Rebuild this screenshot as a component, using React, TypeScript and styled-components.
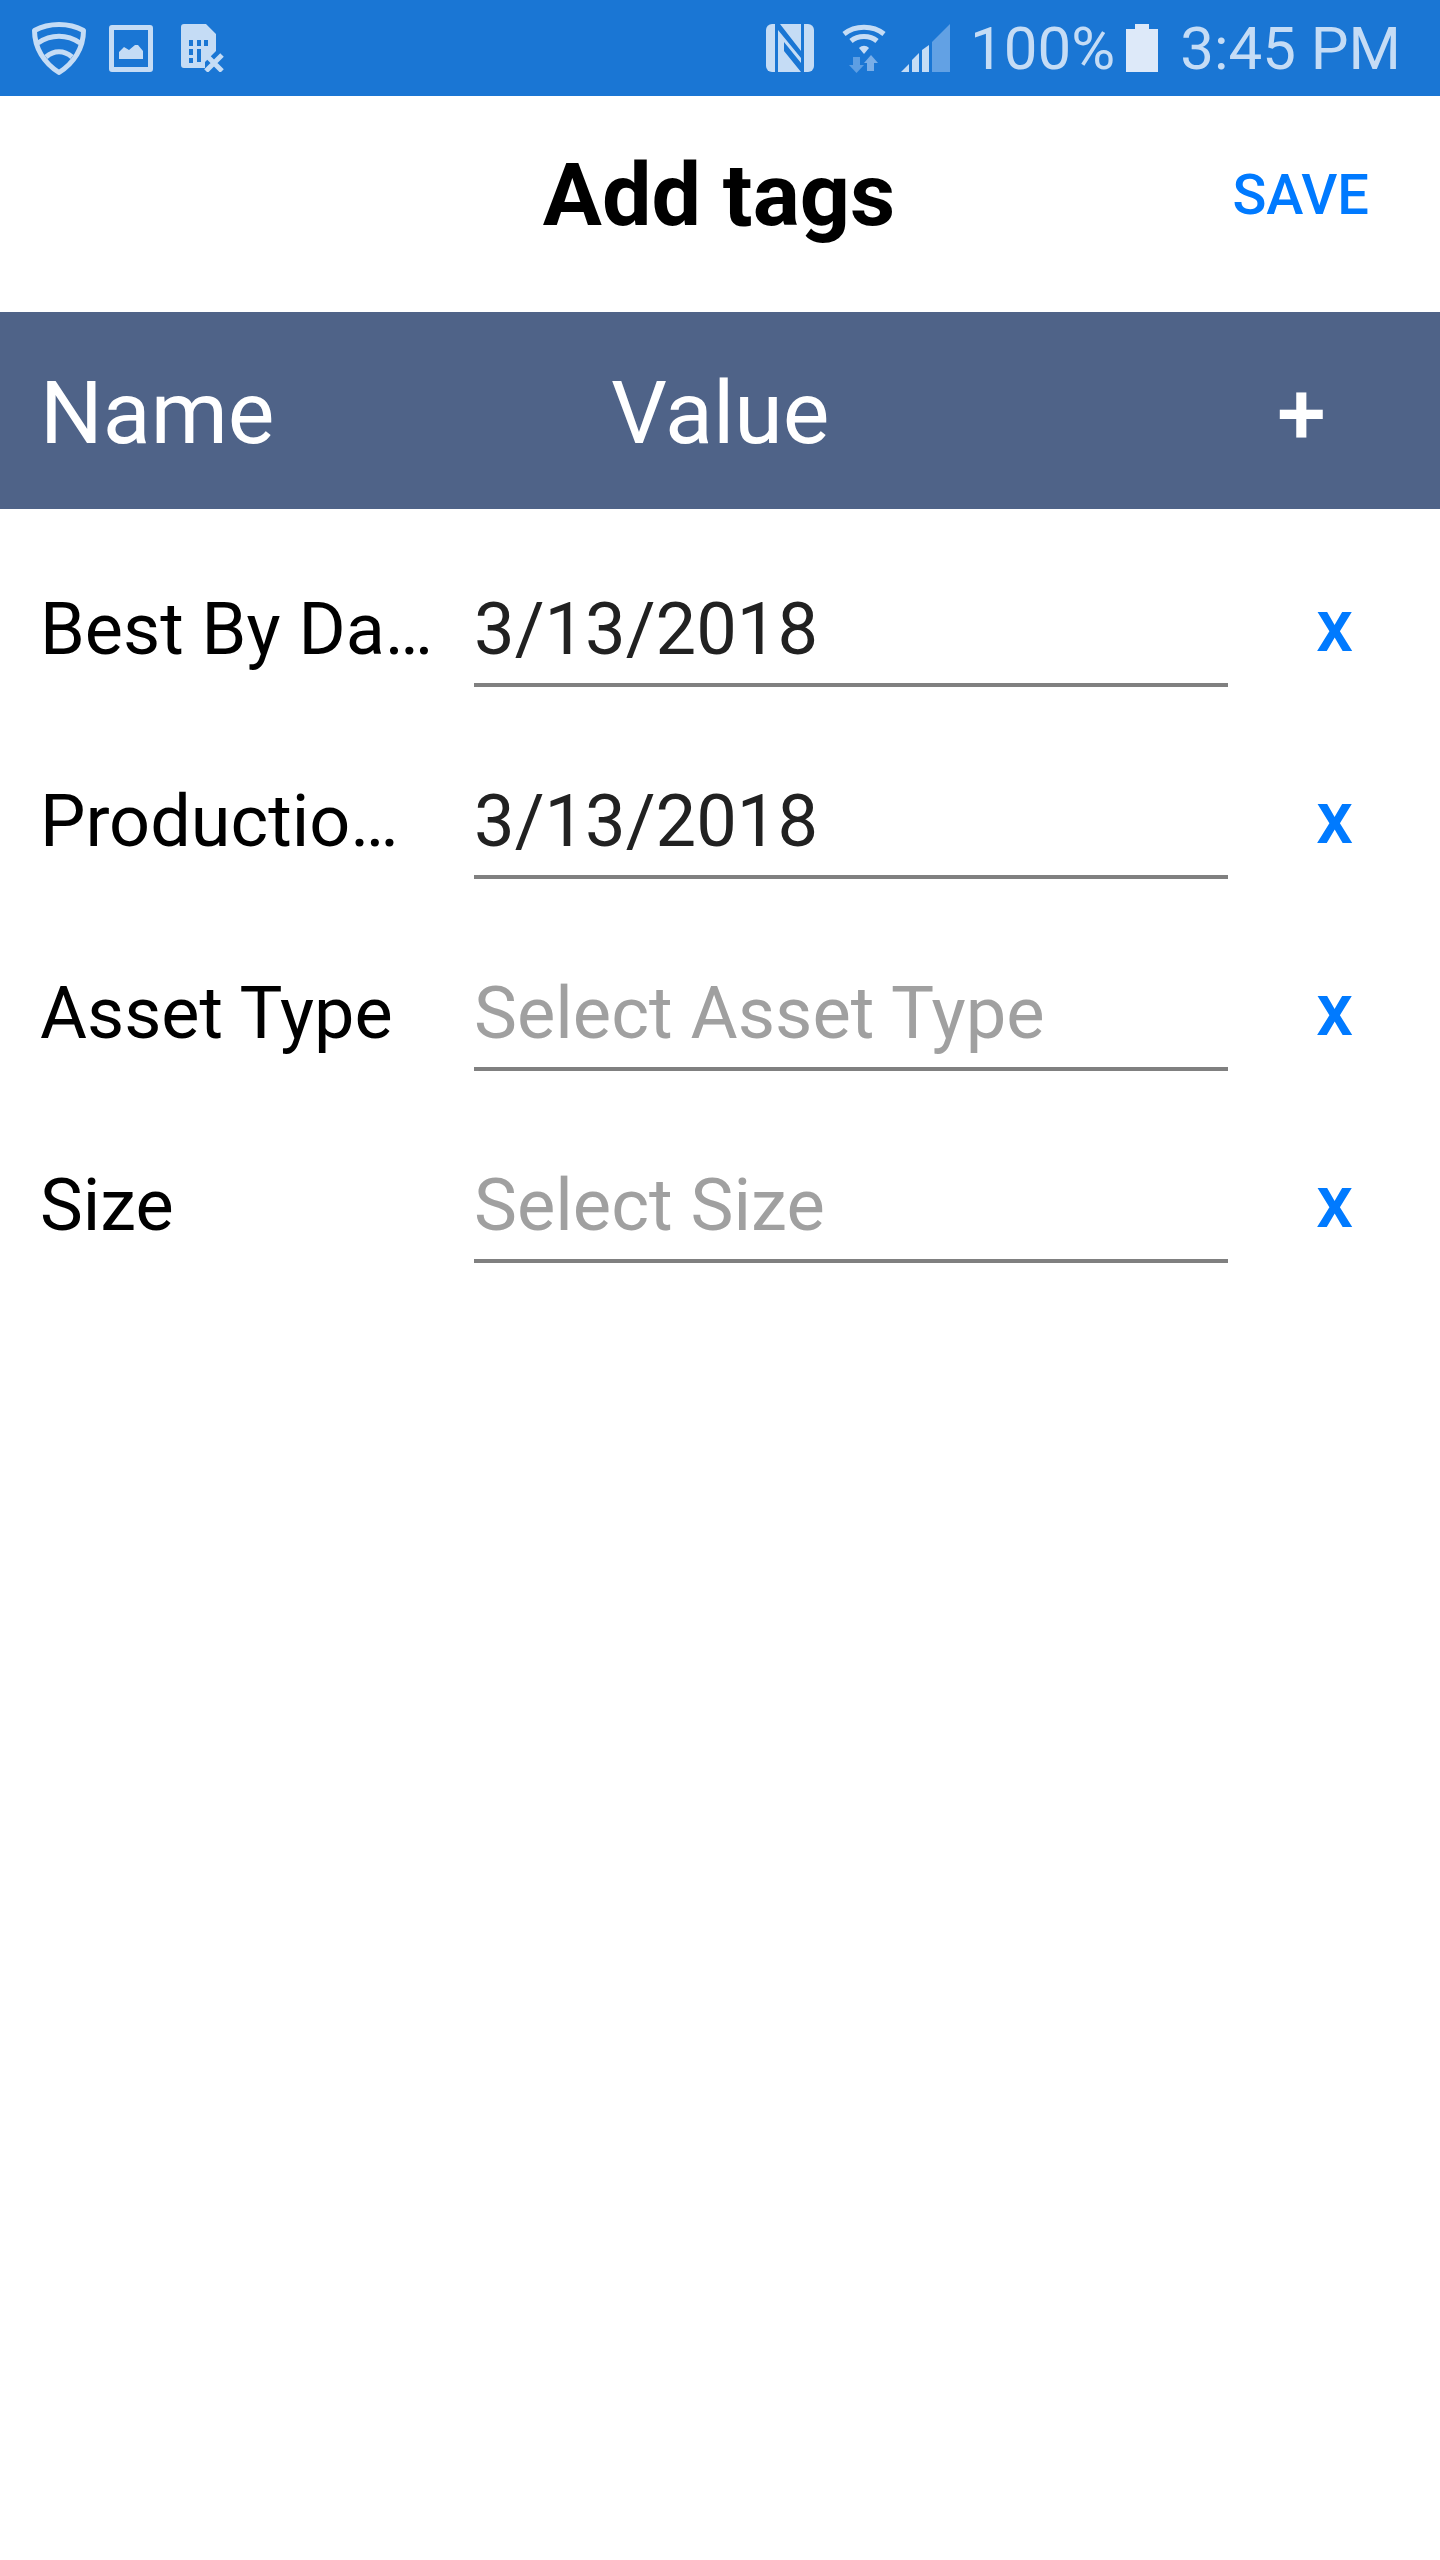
import React from 'react';
import styled, { createGlobalStyle } from 'styled-components';

const GlobalStyle = createGlobalStyle`
	html, body {
		margin: 0;
		padding: 0;
		background: #ffffff;
		font-family: Roboto, 'Liberation Sans', sans-serif;
	}
`;

const tags = [
	{ name: 'Best By Da…', value: '3/13/2018' },
	{ name: 'Productio…', value: '3/13/2018' },
	{ name: 'Asset Type', placeholder: 'Select Asset Type' },
	{ name: 'Size', placeholder: 'Select Size' },
];

const ShieldIcon = () => (
	<svg width='54' height='54' viewBox='0 0 54 54' fill='none' stroke='#c5dcf5' strokeWidth='5'>
		<path d='M2.5 9.5C17 1.5 37 1.5 51.5 9.5C51.5 27 42 42 27 51.5C12 42 2.5 27 2.5 9.5Z' strokeLinejoin='round' />
		<path d='M6 22C19 13 35 13 48 22' />
		<path d='M14 36C22 29 32 29 40 36' />
	</svg>
);

const ImageIcon = () => (
	<svg width='44' height='47' viewBox='0 0 44 47'>
		<path fillRule='evenodd' fill='#c5dcf5' d='M3 0H41A3 3 0 0 1 44 3V44A3 3 0 0 1 41 47H3A3 3 0 0 1 0 44V3A3 3 0 0 1 3 0ZM5 5V42H39V5Z' />
		<path fill='#c5dcf5' d='M10 34V27L15 22L20 25L26 20L29 20L34 26V34Z' />
	</svg>
);

const SimIcon = () => (
	<svg width='44' height='48' viewBox='0 0 44 48'>
		<path
			fillRule='evenodd'
			fill='#c5dcf5'
			d='M3 0H25L35 10V27L24 38L24 44H3A3 3 0 0 1 0 41V3A3 3 0 0 1 3 0ZM8 16V22H12V16ZM16 16V22H20V16ZM23 16V22H27V16ZM8 25V31H12V25ZM16 25V38H20V25ZM8 34V39H12V34Z'
		/>
		<path d='M25 31L41 47M41 31L25 47' stroke='#c5dcf5' strokeWidth='5' />
	</svg>
);

const NfcIcon = () => (
	<svg width='48' height='48' viewBox='0 0 48 48'>
		<rect width='48' height='48' rx='6' fill='#c5dcf5' />
		<path fill='#1a76d4' d='M9 0H14L35 27V0H38V48H35L18 27V18L35 39V34L12 6V48H9Z' />
	</svg>
);

const WifiIcon = () => (
	<svg width='44' height='49' viewBox='0 0 44 49' fill='none'>
		<path d='M2 10C13 1 31 1 42 10' stroke='#c5dcf5' strokeWidth='5' />
		<path d='M9 17C16 11 28 11 35 17' stroke='#c5dcf5' strokeWidth='5' />
		<path d='M17 24C20 21 24 21 27 24L22 30Z' fill='#c5dcf5' />
		<path d='M11 33H18V41H22L14.5 49L7 41H11Z' fill='#5d9ee3' />
		<path d='M25 47V39H22L29 31L36 39H32V47Z' fill='#79aee8' />
	</svg>
);

const SignalIcon = () => (
	<svg width='49' height='48' viewBox='0 0 49 48'>
		<path fill='#c5dcf5' d='M0 48L8 40V48Z' />
		<path fill='#c5dcf5' d='M11 48V36L18 29V48Z' />
		<path fill='#c5dcf5' d='M21 48V26L28 21V48Z' />
		<path fill='#62a1e4' d='M31 48V18L49 0V48Z' />
	</svg>
);

const BatteryIcon = () => (
	<svg width='32' height='48' viewBox='0 0 32 48'>
		<path fill='#dde9f9' d='M9 0H23V5H32V48H0V5H9Z' />
	</svg>
);

function App() {
	return (
		<Screen>
			<GlobalStyle />
			<StatusBar>
				<StatusIcons>
					<ShieldIcon />
					<ImageIcon />
					<SimSlot>
						<SimIcon />
					</SimSlot>
				</StatusIcons>
				<StatusRight>
					<NfcIcon />
					<WifiSlot>
						<WifiIcon />
					</WifiSlot>
					<SignalSlot>
						<SignalIcon />
					</SignalSlot>
					<Battery>100%</Battery>
					<BatterySlot>
						<BatteryIcon />
					</BatterySlot>
					<Clock>3:45 PM</Clock>
				</StatusRight>
			</StatusBar>

			<TitleBar>
				<Title>Add tags</Title>
				<SaveButton>SAVE</SaveButton>
			</TitleBar>

			<TableHead>
				<div>Name</div>
				<div>Value</div>
				<AddButton>+</AddButton>
			</TableHead>

			<TagList>
				{tags.map((tag) => (
					<TagRow key={tag.name}>
						<TagName>{tag.name}</TagName>
						<TagValue $empty={!tag.value}>{tag.value || tag.placeholder}</TagValue>
						<RemoveButton>x</RemoveButton>
					</TagRow>
				))}
			</TagList>
		</Screen>
	);
}

const Screen = styled.div`
	width: 1440px;
	height: 2560px;
	background: #ffffff;
	overflow: hidden;
`;

const StatusBar = styled.div`
	display: flex;
	justify-content: space-between;
	align-items: center;
	height: 96px;
	padding: 0 39px 0 32px;
	box-sizing: border-box;
	background: #1a76d4;
	color: #c5dcf5;
`;

const StatusIcons = styled.div`
	display: flex;
	align-items: center;
	gap: 23px;
	height: 48px;
`;

const SimSlot = styled.div`
	display: flex;
	margin-left: 5px;
`;

const StatusRight = styled.div`
	display: flex;
	align-items: center;
	font-size: 60px;
	line-height: 60px;
`;

const WifiSlot = styled.div`
	display: flex;
	margin-left: 28px;
`;

const SignalSlot = styled.div`
	display: flex;
	margin-left: 15px;
`;

const Battery = styled.div`
	margin: 2px 0 0 20px;
`;

const BatterySlot = styled.div`
	display: flex;
	margin-left: 11px;
`;

const Clock = styled.div`
	margin: 2px 0 0 22px;
`;

const TitleBar = styled.div`
	position: relative;
	display: flex;
	justify-content: center;
	align-items: center;
	height: 216px;
	padding: 0 2px 20px 0;
	box-sizing: border-box;
`;

const Title = styled.div`
	font-size: 88px;
	font-weight: 700;
	color: #000000;
`;

const SaveButton = styled.div`
	position: absolute;
	right: 71px;
	top: 66px;
	font-size: 56px;
	line-height: 66px;
	font-weight: 500;
	color: #007aff;
`;

const TableHead = styled.div`
	display: grid;
	grid-template-columns: 571px 666px 1fr;
	align-items: center;
	height: 197px;
	padding: 4px 0 0 40px;
	box-sizing: border-box;
	background: #4f6388;
	color: #ffffff;
	font-size: 88px;
`;

const AddButton = styled.div`
	margin-top: 2px;
	font-weight: 500;
`;

const TagList = styled.div`
	display: flex;
	flex-direction: column;
	gap: 92px;
	padding-top: 78px;
`;

const TagRow = styled.div`
	display: flex;
	align-items: flex-end;
	height: 100px;
	padding-left: 40px;
`;

const TagName = styled.div`
	width: 401px;
	margin-right: 33px;
	padding-bottom: 15px;
	font-size: 72px;
	line-height: 84px;
	color: #000000;
	white-space: nowrap;
`;

const TagValue = styled.div<{ $empty: boolean }>`
	width: 754px;
	height: 100px;
	box-sizing: border-box;
	padding-bottom: 9px;
	border-bottom: 4px solid #808080;
	font-size: 72.3px;
	line-height: 86px;
	color: ${(p) => (p.$empty ? '#a0a0a0' : '#212121')};
`;

const RemoveButton = styled.div`
	margin-left: 88px;
	padding-bottom: 19px;
	font-size: 74px;
	line-height: 84px;
	font-weight: 500;
	color: #007aff;
`;

export default App;
